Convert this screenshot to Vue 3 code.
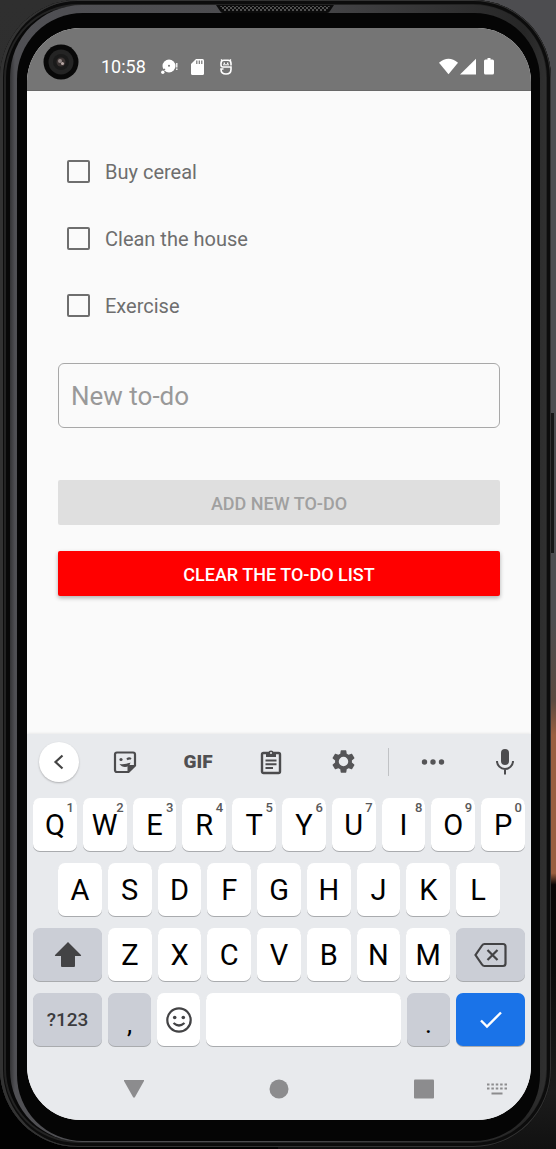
<script setup>
import { ref } from 'vue'

const todos = ref([
  { id: 1, text: 'Buy cereal', done: false },
  { id: 2, text: 'Clean the house', done: false },
  { id: 3, text: 'Exercise', done: false },
])
const draft = ref('')

const rowOne = 'QWERTYUIOP'.split('').map((letter, i) => ({ letter, digit: (i + 1) % 10 }))
const rowTwo = 'ASDFGHJKL'.split('')
const rowThree = 'ZXCVBNM'.split('')

function addTodo() {
  if (!draft.value) return
  todos.value.push({ id: Date.now(), text: draft.value, done: false })
  draft.value = ''
}
function clearTodos() {
  todos.value = []
}
function type(char) {
  draft.value += char
}
function erase() {
  draft.value = draft.value.slice(0, -1)
}
</script>

<template>
  <div class="desktop">
    <div class="device">
      <div class="side-button"></div>
      <div class="rim">
        <svg class="speaker" viewBox="0 0 118 8" aria-hidden="true">
          <defs>
            <pattern id="mesh" width="4" height="4" patternUnits="userSpaceOnUse">
              <circle cx="1" cy="1" r="1" fill="#666" />
              <circle cx="3" cy="3" r="1" fill="#666" />
            </pattern>
          </defs>
          <path d="M0 0h118l-4 6q-1 2-3 2H7q-2 0-3-2z" fill="#0c0c0c" />
          <path d="M4 1h110l-3 5H7z" fill="url(#mesh)" />
        </svg>
        <div class="bezel">
          <div class="screen">
            <header class="status">
              <svg class="camera" viewBox="0 0 36 36" aria-hidden="true">
                <circle cx="18" cy="18" r="17.5" fill="#080808" />
                <circle cx="18" cy="18" r="12.5" fill="#242424" />
                <circle cx="18" cy="18" r="8" fill="#1a1a1a" />
                <circle cx="18" cy="18" r="4.5" fill="#3a3332" />
                <circle cx="17" cy="17" r="2" fill="#8f8583" />
                <circle cx="19.5" cy="19.5" r="1.5" fill="#b9a9a6" />
              </svg>
              <span class="clock">10:58</span>
              <svg class="notice" viewBox="0 0 17 16" aria-hidden="true">
                <circle cx="8" cy="7" r="6.5" fill="#fff" />
                <path d="M4 10l-3 2" stroke="#757575" stroke-width="1.5" />
                <circle cx="1.8" cy="13.2" r="1.7" fill="#fff" />
                <circle cx="8" cy="6.8" r="1" fill="#757575" />
                <path d="M15.800 4v4.500M15.800 9.500v1.500" stroke="#fff" stroke-width="1.300" />
              </svg>
              <svg class="card" viewBox="0 0 13 16" aria-hidden="true">
                <path d="M5 0h6.500Q13 0 13 1.500v13q0 1.500-1.500 1.500h-10Q0 16 0 14.500V5z" fill="#fff" />
                <path d="M5.800 1.500v3.500M8.300 1.500v3.500M10.800 1.500v3.500" stroke="#757575" stroke-width="1.200" />
              </svg>
              <svg class="droid" viewBox="0 0 12 16" fill="none" stroke="#fff" aria-hidden="true">
                <path d="M1 .5l1.500 1.500M11 .5L9.500 2" stroke-width="1.400" />
                <path d="M11 6.500V4.500Q11 1.300 8 1.300H4Q1 1.300 1 4.500V6Q1 8 3 8H11V10.500Q11 15 6 15T1 10.500V10H3.500" stroke-width="1.600" />
                <path d="M3 5.800h6" stroke-width="1" />
                <path d="M4.300 3.500v1.500M7.700 3.500v1.500" stroke-width="1.300" />
              </svg>
              <svg class="signal" viewBox="0 0 56 18" fill="#fff" aria-hidden="true">
                <path d="M0 4.800Q9.500-3.200 19 4.800L9.500 16.300z" />
                <path d="M21 16.500L37 .8v15.700z" />
                <path d="M48.500 0h3v1.500h2Q55 1.500 55 3v12q0 1.500-1.500 1.500h-7Q45 16.500 45 15V3q0-1.500 1.500-1.500h2z" />
              </svg>
            </header>

            <main class="content">
              <ul class="todos">
                <li v-for="todo in todos" :key="todo.id">
                  <label class="todo">
                    <input v-model="todo.done" type="checkbox" />
                    <span>{{ todo.text }}</span>
                  </label>
                </li>
              </ul>
              <input v-model="draft" class="field" type="text" placeholder="New to-do" aria-label="New to-do" />
              <button class="action add" type="button" :disabled="!draft" @click="addTodo">ADD NEW TO-DO</button>
              <button class="action clear" type="button" @click="clearTodos">CLEAR THE TO-DO LIST</button>
            </main>

            <section class="keyboard" aria-label="Keyboard">
              <div class="tools">
                <button class="tool back" type="button" aria-label="Back">
                  <svg viewBox="0 0 24 24" fill="none" stroke="#444" stroke-width="2.200"><path d="M15.500 5.500L8.500 12l7 6.500" /></svg>
                </button>
                <button class="tool" type="button" aria-label="Stickers">
                  <svg viewBox="0 0 24 24">
                    <path d="M4 2.500H20Q22 2.500 22 4.500V15.500L15.500 22H4Q2 22 2 20V4.500Q2 2.500 4 2.500z" fill="none" stroke="#4c4c4e" stroke-width="2.200" />
                    <path d="M14.500 22.500V17q0-2 2-2H23z" fill="#4c4c4e" />
                    <path d="M6.500 14q5 1 11-1.500-1 4.500-5.500 4.500-3.500 0-5.500-3z" fill="#4c4c4e" />
                    <circle cx="8" cy="9.500" r="1.600" fill="#4c4c4e" />
                    <path d="M14 9.500q2-2 4-.5" fill="none" stroke="#4c4c4e" stroke-width="2" />
                  </svg>
                </button>
                <button class="tool gif" type="button">GIF</button>
                <button class="tool" type="button" aria-label="Clipboard">
                  <svg class="tall" viewBox="0 0 22 26">
                    <rect x="2" y="4" width="18" height="20" rx="1.500" fill="none" stroke="#4c4c4e" stroke-width="2.400" />
                    <path d="M6 3.500h2.300a2.800 2.800 0 0 1 5.400 0H16v4.500H6z" fill="#4c4c4e" />
                    <circle cx="11" cy="4" r="1" fill="#e8eaed" />
                    <path d="M5.500 11.500h11M5.500 15.300h11M5.500 19.100h7.500" stroke="#4c4c4e" stroke-width="2" />
                  </svg>
                </button>
                <button class="tool" type="button" aria-label="Settings">
                  <svg class="gear" viewBox="0 0 24 24" fill="#555557">
                    <path d="M19.430 12.980c.04-.32.070-.64.070-.98s-.03-.66-.07-.98l2.110-1.650c.19-.15.240-.42.120-.64l-2-3.460c-.12-.22-.39-.3-.61-.22l-2.490 1c-.52-.4-1.080-.73-1.690-.98l-.38-2.650C14.460 2.180 14.250 2 14 2h-4c-.25 0-.46.18-.49.420l-.38 2.650c-.61.250-1.170.590-1.690.980l-2.490-1c-.23-.09-.49 0-.61.220l-2 3.460c-.13.220-.07.490.120.640l2.110 1.650c-.04.320-.07.650-.07.980s.03.660.070.980l-2.110 1.650c-.19.150-.24.420-.12.640l2 3.460c.12.220.390.300.610.220l2.490-1c.52.400 1.080.730 1.690.980l.38 2.650c.03.240.240.420.490.420h4c.25 0 .46-.18.490-.42l.38-2.650c.61-.25 1.170-.59 1.690-.98l2.490 1c.23.090.490 0 .61-.22l2-3.460c.12-.22.070-.49-.12-.64l-2.110-1.650zM12 16.200A4.200 4.200 0 1 1 12 7.800a4.200 4.200 0 0 1 0 8.400z" />
                  </svg>
                </button>
                <span class="divider"></span>
                <button class="tool" type="button" aria-label="More">
                  <svg viewBox="0 0 24 24" fill="#555557"><circle cx="3.500" cy="12" r="2.700" /><circle cx="12" cy="12" r="2.700" /><circle cx="20.500" cy="12" r="2.700" /></svg>
                </button>
                <button class="tool mic" type="button" aria-label="Voice input">
                  <svg class="tall" viewBox="0 0 20 26">
                    <rect x="6" y="0" width="8" height="16" rx="4" fill="#4c4c4e" />
                    <path d="M2 12a8 8 0 0 0 16 0M10 20v5.500" fill="none" stroke="#4c4c4e" stroke-width="2" />
                  </svg>
                </button>
              </div>

              <div class="keys">
                <div class="row">
                  <button v-for="key in rowOne" :key="key.letter" class="key" type="button" @click="type(key.letter)">
                    {{ key.letter }}<span class="digit">{{ key.digit }}</span>
                  </button>
                </div>
                <div class="row inner">
                  <button v-for="letter in rowTwo" :key="letter" class="key" type="button" @click="type(letter)">{{ letter }}</button>
                </div>
                <div class="row">
                  <button class="key wide soft" type="button" aria-label="Shift">
                    <svg class="shift" viewBox="0 0 28 26" fill="#434345"><path d="M14 0L27 13q.5 1-.5 1H21v10q0 1-1 1H8q-1 0-1-1V14H1.500q-1 0-.5-1z" /></svg>
                  </button>
                  <button v-for="letter in rowThree" :key="letter" class="key" type="button" @click="type(letter)">{{ letter }}</button>
                  <button class="key wide soft" type="button" aria-label="Delete" @click="erase">
                    <svg class="erase" viewBox="0 0 34 26" fill="none" stroke="#434345" stroke-width="2.200">
                      <path d="M10.500 2H29q2.500 0 2.500 2.500v17Q31.500 24 29 24H10.500Q9 24 8 22.500L1.500 13 8 3.500Q9 2 10.500 2zM13.500 8l10 10M23.500 8l-10 10" />
                    </svg>
                  </button>
                </div>
                <div class="row">
                  <button class="key wide soft mode" type="button">?123</button>
                  <button class="key soft mark" type="button" @click="type(',')">,</button>
                  <button class="key" type="button" aria-label="Emoji">
                    <svg class="smile" viewBox="0 0 26 26" fill="none" stroke="#434345" stroke-width="2.200">
                      <circle cx="13" cy="13" r="11.700" />
                      <path d="M7.500 16q5.500 5 11 0" />
                      <circle cx="8.700" cy="10.500" r="1.800" fill="#434345" stroke="none" />
                      <circle cx="17.300" cy="10.500" r="1.800" fill="#434345" stroke="none" />
                    </svg>
                  </button>
                  <button class="key space" type="button" aria-label="Space" @click="type(' ')"></button>
                  <button class="key soft mark" type="button" @click="type('.')">.</button>
                  <button class="key wide enter" type="button" aria-label="Done" @click="addTodo">
                    <svg class="check" viewBox="0 0 22 18" fill="none" stroke="#fff" stroke-width="2.400"><path d="M1 9.500L7 15.500 21 1.500" /></svg>
                  </button>
                </div>
              </div>

              <nav class="navbar">
                <button type="button" aria-label="Hide keyboard">
                  <svg viewBox="0 0 20 20" fill="#8c8c8e"><path d="M.5 1h19q1 0 .5 1L11 18q-1 1.500-2 0L0 2q-.5-1 .5-1z" /></svg>
                </button>
                <button type="button" aria-label="Home">
                  <svg viewBox="0 0 20 20" fill="#8c8c8e"><circle cx="10" cy="10" r="9.500" /></svg>
                </button>
                <button class="recent" type="button" aria-label="Recent apps">
                  <svg viewBox="0 0 20 20" fill="#8c8c8e"><rect width="20" height="19" y=".5" rx="1" /></svg>
                </button>
                <button type="button" aria-label="Switch keyboard">
                  <svg viewBox="0 0 20 12" stroke="#8c8c8e" stroke-width="2" fill="none">
                    <path d="M0 1.500h20M0 5.500h20" stroke-dasharray="2.500 1.875" />
                    <path d="M4.500 10.500h11" />
                  </svg>
                </button>
              </nav>
            </section>
          </div>
        </div>
      </div>
    </div>
  </div>
</template>

<style>
body {
  margin: 0;
  background: #000;
}
</style>

<style scoped>
.desktop {
  min-height: 100vh;
  box-sizing: border-box;
  display: flex;
  padding: 0 5px 2px 0;
  font-family: Roboto, "Liberation Sans", sans-serif;
  background: linear-gradient(
    #4d4d50 0, #4d4d50 54%, #5b4a40 61%, #9a5f40 64%, #9a5f40 76%, #0a0606 77%, #0a0a0a 84%, #1c1c1c 95%, #111 100%
  ) right / 50% 100% no-repeat, linear-gradient(#2f2f2f, #2a2a2a 70%, #020202 90%);
}
.device {
  position: relative;
  flex: 1;
  display: flex;
  padding: 5px 5px 5px 10px;
  border-radius: 78px;
  background: #080808;
  box-shadow: inset 0 0 0 1px #333, inset 3px 0 0 #333, inset 0 0 0 4px #0c0c0c, inset 0 0 0 6px #232323;
}
.side-button {
  position: absolute;
  top: 36%;
  right: -3px;
  width: 3px;
  height: 140px;
  background: #161616;
}
.rim {
  position: relative;
  flex: 1;
  display: flex;
  padding: 8px 6px 1px 7px;
  border-radius: 72px;
  background: linear-gradient(90deg, #333335 0, #505054 5px, #4b4b4e 50%, #262626 96%, #303030);
}
.speaker {
  position: absolute;
  top: 0;
  left: 50%;
  width: 118px;
  height: 8px;
  margin-left: -62px;
}
.bezel {
  flex: 1;
  display: flex;
  padding: 15px 9px 21px 10px;
  border-radius: 66px;
  background: #050505;
}
.screen {
  flex: 1;
  min-width: 0;
  display: flex;
  flex-direction: column;
  overflow: hidden;
  border-radius: 54px;
  background: #fafafa;
}
.status {
  display: flex;
  align-items: center;
  box-sizing: border-box;
  height: 63px;
  padding: 16px 36px 0 16px;
  border-bottom: 1px solid #696969;
  background: #757575;
}
.camera {
  width: 36px;
  height: 36px;
  margin: 0 22px 10px 0;
}
.clock {
  margin-right: 15px;
  color: #fff;
  font-size: 18px;
  line-height: 20px;
}
.notice {
  width: 17px;
  height: 16px;
  margin-right: 13px;
}
.card {
  width: 13px;
  height: 16px;
  margin-right: 16px;
}
.droid {
  width: 12px;
  height: 16px;
}
.signal {
  width: 56px;
  height: 18px;
  margin-left: auto;
}
.content {
  flex: 1;
  display: flex;
  flex-direction: column;
  padding: 56px 31px 24px;
}
.todos {
  margin: 0;
  padding: 0;
  list-style: none;
}
.todo {
  display: flex;
  align-items: center;
  gap: 15px;
  height: 48px;
  margin-bottom: 19px;
  padding-left: 9px;
  color: #6e6e6e;
  font-size: 20px;
  line-height: 24px;
}
.todo span {
  padding-top: 2px;
}
.todo input {
  appearance: none;
  box-sizing: border-box;
  width: 23px;
  height: 23px;
  margin: 0;
  border: 2px solid #6e6e6e;
  border-radius: 2px;
}
.todo input:checked {
  background: #6e6e6e;
}
.field {
  box-sizing: border-box;
  width: 100%;
  height: 65px;
  margin: 15px 0 52px;
  padding: 0 12px;
  border: 1px solid #a8a8a8;
  border-radius: 6px;
  outline: none;
  background: transparent;
  color: #222;
  font: 26px Roboto, "Liberation Sans", sans-serif;
}
.field::placeholder {
  color: #999;
  opacity: 1;
}
.action {
  height: 45px;
  padding: 2px 0 0;
  border: 0;
  border-radius: 2px;
  font: 500 18px Roboto, "Liberation Sans", sans-serif;
}
.add {
  margin-bottom: 26px;
  background: #dfdfdf;
  color: #a0a0a0;
}
.clear {
  background: #f00;
  color: #fff;
  box-shadow: 0 2px 4px rgba(0, 0, 0, 0.3);
}
.keyboard {
  background: #e8eaed;
  box-shadow: 0 0 3px rgba(0, 0, 0, 0.12);
}
.tools {
  display: grid;
  grid-template-columns: 62fr 73fr 73fr 73fr 73fr 16fr 73fr 62fr;
  align-items: center;
  justify-items: center;
  height: 55px;
  padding-bottom: 9px;
}
.tool {
  display: flex;
  align-items: center;
  justify-content: center;
  width: 40px;
  height: 40px;
  padding: 0;
  border: 0;
  border-radius: 50%;
  background: none;
}
.tool svg {
  width: 24px;
  height: 24px;
}
.tool .tall {
  height: 26px;
}
.tool .gear {
  width: 27px;
  height: 27px;
}
.gif {
  color: #505052;
  font: 900 19px Roboto, "Liberation Sans", sans-serif;
}
.back {
  justify-self: start;
  margin-left: 12px;
  background: #fff;
  box-shadow: 0 1px 2px rgba(0, 0, 0, 0.25);
}
.mic {
  justify-self: end;
  margin-right: 6px;
}
.divider {
  width: 1px;
  height: 28px;
  background: #c0c2c5;
}
.keys {
  display: flex;
  flex-direction: column;
  gap: 12px;
  padding: 0 6px;
}
.row {
  display: flex;
  gap: 6px;
}
.inner {
  padding: 0 25px;
}
.key {
  position: relative;
  display: flex;
  align-items: center;
  justify-content: center;
  flex: 2 1 0;
  min-width: 0;
  height: 53px;
  padding: 0;
  border: 0;
  border-radius: 7px;
  background: #fff;
  color: #000;
  font: 29px Roboto, "Liberation Sans", sans-serif;
  box-shadow: 0 1px 0 #a9abae;
}
.digit {
  position: absolute;
  top: 2px;
  right: 3px;
  color: #58585a;
  font-size: 13px;
  font-weight: 500;
  line-height: 16px;
}
.wide {
  flex: 0 0 69px;
}
.space {
  flex: 9 1 0;
}
.soft {
  background: #cbced6;
}
.mode {
  color: #3c3c3e;
  font-size: 19px;
  font-weight: 500;
}
.mark {
  padding-top: 8px;
  font-size: 26px;
}
.enter {
  background: #1a73e8;
}
.shift {
  width: 28px;
  height: 26px;
}
.erase {
  width: 34px;
  height: 26px;
}
.smile {
  width: 26px;
  height: 26px;
}
.check {
  width: 22px;
  height: 18px;
}
.navbar {
  display: grid;
  grid-template-columns: 214fr 76fr 62fr 90fr 56fr 6fr;
  align-items: center;
  height: 74px;
}
.navbar button {
  display: flex;
  align-items: center;
  justify-content: center;
  height: 40px;
  margin-top: 12px;
  padding: 0;
  border: 0;
  background: none;
}
.navbar svg {
  width: 20px;
  height: 20px;
}
.recent {
  grid-column: 4;
}
</style>
